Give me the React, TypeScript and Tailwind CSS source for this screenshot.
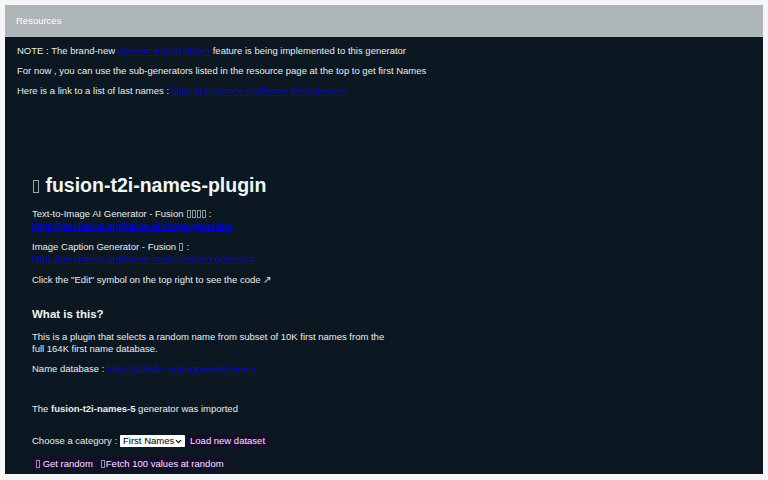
import { ChevronDown } from 'lucide-react'

function Tofu({ large }: { large?: boolean }) {
  return (
    <span
      className={
        large
          ? 'mr-[1px] inline-block h-[13px] w-[6px] border border-[#9aa5aa] align-[-1px]'
          : 'mx-[0.5px] inline-block h-[8px] w-[4px] border border-[#8b969b] align-[-1px]'
      }
    />
  )
}

export default function App() {
  return (
    <div className="h-[480px] overflow-hidden bg-[#f4f6f7] pt-[5px] px-[5px] pb-[6px]">
      <div className="h-[469px] w-[758px] overflow-hidden bg-[#0b1821] text-[9.5px] leading-[12px] text-[#e9eced] font-['Liberation_Sans',Arial,sans-serif]">
        <div className="flex h-[32px] items-center bg-[#aeb6b8] pl-[11px] text-[9.5px] text-white">Resources</div>

        <div className="px-[12px] pt-[8px]">
          <p>
            NOTE : The brand-new <a href="#" className="text-[#0000ee] underline">dynamic import plugin</a> feature is being implemented to this generator
          </p>
          <p className="mt-[8px]">For now , you can use the sub-generators listed in the resource page at the top to get first Names</p>
          <p className="mt-[8px]">
            Here is a link to a list of last names : <a href="#" className="text-[#0000ee] underline">https://perchance.org/fusion-t2i-lastnames</a>
          </p>
        </div>

        <div className="pl-[27px] pt-[77px]">
          <h1 className="ml-[1px] text-[19.5px] leading-[22px] font-bold text-[#f2f5f5]">
            <Tofu large /> fusion-t2i-names-plugin
          </h1>

          <p className="mt-[12px]">
            Text-to-Image AI Generator - Fusion <Tofu /><Tofu /><Tofu /><Tofu /> :
          </p>
          <p>
            <a href="#" className="text-[#0000ee] underline">https://perchance.org/fusion-ai-image-generator</a>
          </p>
          <p className="mt-[9px]">
            Image Caption Generator - Fusion <Tofu /> :
          </p>
          <p>
            <a href="#" className="text-[#0000ee] underline">https://perchance.org/fusion-image-caption-generator</a>
          </p>
          <p className="mt-[9px]">Click the "Edit" symbol on the top right to see the code ↗</p>

          <h2 className="mt-[21px] text-[11.5px] leading-[15px] font-bold text-[#f2f5f5]">What is this?</h2>
          <p className="mt-[9px] w-[355px]">
            This is a plugin that selects a random name from subset of 10K first names from the full 164K first name database.
          </p>
          <p className="mt-[8px]">
            Name database : <a href="#" className="text-[#0000ee] underline">https://github.com/sigpwned/names</a>
          </p>

          <p className="mt-[28px]">
            The <b>fusion-t2i-names-5</b> generator was imported
          </p>

          <div className="mt-[20px] flex items-center">
            <span>Choose a category :</span>
            <span className="relative ml-[3px] h-[12px] w-[65px] rounded-[1px] bg-white">
              <select className="h-full w-full appearance-none bg-transparent pl-[3px] text-[9.5px] text-black">
                <option>First Names</option>
              </select>
              <ChevronDown size={9} strokeWidth={3} className="pointer-events-none absolute right-[2px] top-[2px] text-black" />
            </span>
            <button className="ml-[2px] h-[12px] bg-[#1a0b2e] px-[3px] text-[#f0e6ff]">Load new dataset</button>
          </div>

          <div className="mt-[10px] flex items-center">
            <button className="h-[13px] bg-[#1a0b2e] px-[3px] text-[#f0e6ff]"><Tofu /> Get random</button>
            <button className="ml-[2px] h-[13px] bg-[#1a0b2e] px-[3px] text-[#f0e6ff]"><Tofu />Fetch 100 values at random</button>
          </div>
        </div>
      </div>
    </div>
  )
}
